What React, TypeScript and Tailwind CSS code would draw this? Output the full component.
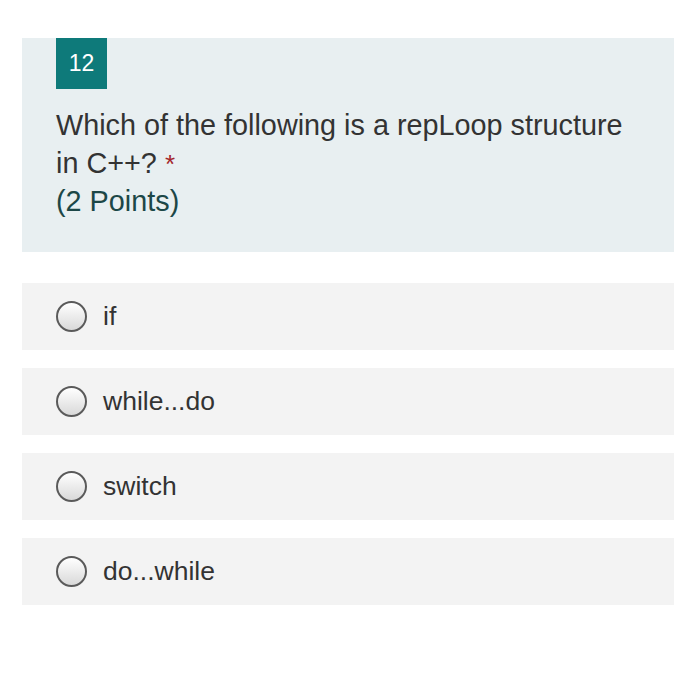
import React from "react";

const options = ["if", "while...do", "switch", "do...while"];

function Radio() {
  return (
    <span className="box-border block h-[31px] w-[31px] shrink-0 rounded-full border-2 border-[#5a5a5a] bg-gradient-to-b from-[#ffffff] to-[#d9d9d9]" />
  );
}

export default function App() {
  return (
    <div
      className="min-h-[685px] w-[700px] bg-white pt-[38px]"
      style={{ fontFamily: '"Liberation Sans", Arial, sans-serif' }}
    >
      <div className="ml-[22px] mr-[26px] h-[214px] bg-[#e8eff1] px-[34px]">
        <div className="flex h-[51px] w-[51px] items-center justify-center bg-[#0e7a7a] text-[23px] text-white">
          12
        </div>
        <div className="mt-[18px] text-[28.8px] leading-[37.5px] text-[#333333]">
          <div>Which of the following is a repLoop structure</div>
          <div className="flex items-baseline gap-[8px]">
            <span>in C++?</span>
            <span className="text-[26px] text-[#a4262c]">*</span>
          </div>
        </div>
        <div className="text-[28.8px] leading-[37.5px] text-[#1c4747]">(2 Points)</div>
      </div>
      <div className="ml-[22px] mr-[26px] mt-[31px] flex flex-col gap-[18px]">
        {options.map((o) => (
          <div
            key={o}
            className="flex h-[67px] items-center gap-[16px] bg-[#f3f3f3] px-[34px] text-[26.5px] text-[#333333]"
          >
            <Radio />
            <span>{o}</span>
          </div>
        ))}
      </div>
    </div>
  );
}
